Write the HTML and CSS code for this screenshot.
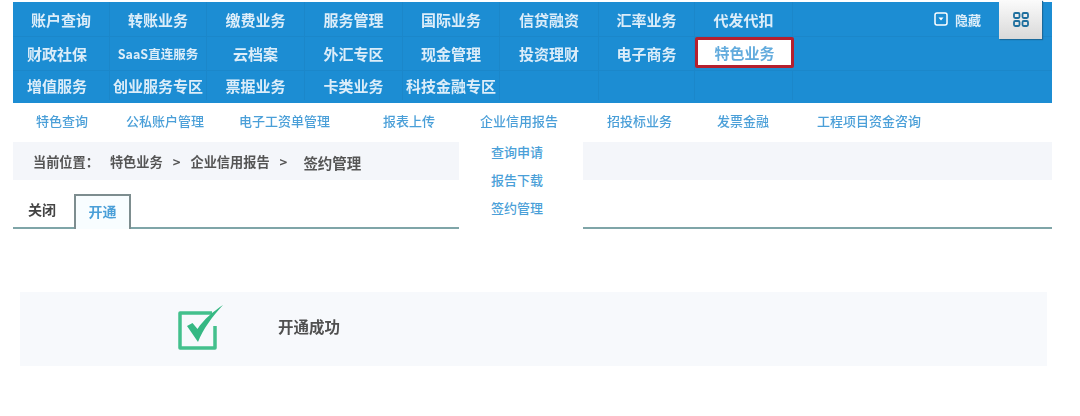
FILE: index.html
```html
<!DOCTYPE html>
<html lang="zh-CN">
<head>
    <meta charset="UTF-8">
    <title>特色业务 - 签约管理</title>
    <link rel="stylesheet" href="styles.css">
</head>
<body>
    <div class="page">
        <div class="nav">
            <div class="nav-row">
                <a class="nav-item">账户查询</a>
                <a class="nav-item">转账业务</a>
                <a class="nav-item">缴费业务</a>
                <a class="nav-item">服务管理</a>
                <a class="nav-item">国际业务</a>
                <a class="nav-item">信贷融资</a>
                <a class="nav-item">汇率业务</a>
                <a class="nav-item">代发代扣</a>
                <div class="nav-tools">
                    <span class="hide-link">
                        <svg class="hide-icon" viewBox="0 0 14 14" width="14" height="14">
                            <rect x="1" y="1" width="12" height="12" rx="2" fill="none" stroke="#fff" stroke-width="1.5"/>
                            <path d="M4.5 5.5h5L7 8.5z" fill="#fff"/>
                        </svg>
                        隐藏
                    </span>
                    <span class="grid-btn">
                        <svg viewBox="0 0 16 15" width="16" height="15">
                            <g fill="none" stroke="#1f6f9e" stroke-width="1.8">
                                <rect x="1" y="1" width="5.5" height="5" rx="1.2"/>
                                <rect x="9.5" y="1" width="5.5" height="5" rx="1.2"/>
                                <rect x="1" y="9" width="5.5" height="5" rx="1.2"/>
                                <rect x="9.5" y="9" width="5.5" height="5" rx="1.2"/>
                            </g>
                        </svg>
                    </span>
                </div>
            </div>
            <div class="nav-row">
                <a class="nav-item first">财政社保</a>
                <a class="nav-item small">SaaS直连服务</a>
                <a class="nav-item">云档案</a>
                <a class="nav-item">外汇专区</a>
                <a class="nav-item">现金管理</a>
                <a class="nav-item">投资理财</a>
                <a class="nav-item">电子商务</a>
                <a class="nav-item active">特色业务</a>
            </div>
            <div class="nav-row">
                <a class="nav-item first">增值服务</a>
                <a class="nav-item">创业服务专区</a>
                <a class="nav-item">票据业务</a>
                <a class="nav-item">卡类业务</a>
                <a class="nav-item">科技金融专区</a>
                <a class="nav-item"></a>
                <a class="nav-item"></a>
                <a class="nav-item"></a>
            </div>
        </div>

        <div class="subnav">
            <a>特色查询</a>
            <a>公私账户管理</a>
            <a>电子工资单管理</a>
            <a>报表上传</a>
            <a>企业信用报告</a>
            <a>招投标业务</a>
            <a>发票金融</a>
            <a>工程项目资金咨询</a>
        </div>

        <div class="content">
            <div class="crumb">
                <span class="crumb-label">当前位置：</span>
                <span>特色业务</span>
                <span class="crumb-sep">&gt;</span>
                <span>企业信用报告</span>
                <span class="crumb-sep">&gt;</span>
                <span class="crumb-last">签约管理</span>
            </div>

            <div class="tabs">
                <span class="tab">关闭</span>
                <span class="tab tab-on">开通</span>
            </div>

            <div class="dropdown">
                <a>查询申请</a>
                <a>报告下载</a>
                <a>签约管理</a>
            </div>
        </div>

        <div class="result">
            <svg class="result-icon" viewBox="0 0 46 46" width="46" height="46">
                <path d="M35 9H3v35h35V22" fill="none" stroke="#43c08c" stroke-width="3.5" stroke-linejoin="round"/>
                <path d="M10 22l11 16C26 25 35 13 46 1 37 7 27 15 20.500 25l-5-6z" fill="#35b883"/>
            </svg>
            <span class="result-text">开通成功</span>
        </div>
    </div>
</body>
</html>
```

FILE: styles.css
```css
body {
    margin: 0;
    background: #ffffff;
    font-family: "Noto Sans CJK SC", "Liberation Sans", sans-serif;
}

.page {
    padding: 2px 28px 0 13px;
    filter: blur(0.7px);
}

.nav {
    background: #1c8dd3;
    color: #dcedf9;
    font-size: 15px;
    font-weight: 700;
}

.nav-row {
    display: grid;
    grid-template-columns: 97px 97px 98px 98px 97px 99px 96px 98px 1fr;
    height: 33px;
    border-bottom: 1px solid #1b87ca;
}

.nav-row:first-child {
    height: 34px;
}

.nav-row:last-child {
    height: 32px;
    padding-bottom: 3px;
    box-sizing: border-box;
    border-bottom: none;
}

.nav-item {
    display: flex;
    align-items: center;
    justify-content: center;
    border-right: 1px solid #1b87ca;
}

.nav-item.first {
    padding-right: 8px;
}

.nav-item.small {
    font-size: 12.5px;
}

.nav-item.active {
    background: #ffffff;
    color: #62abdd;
    border: 3px solid #b4202f;
    border-radius: 2px;
    height: 31px;
    box-sizing: border-box;
    margin-right: -1px;
}

.nav-tools {
    display: flex;
    justify-content: flex-end;
    padding-right: 10px;
    position: relative;
}

.hide-link {
    display: flex;
    align-items: center;
    gap: 7px;
    height: 34px;
    margin-right: 61px;
    font-size: 13px;
}

.grid-btn {
    position: absolute;
    top: -2px;
    right: 10px;
    width: 43px;
    height: 39px;
    display: flex;
    align-items: center;
    justify-content: center;
    background: linear-gradient(#fbfbfb, #d9d9d9);
    box-shadow: 1px 1px 1px #1a6a9c;
}

.subnav {
    display: grid;
    grid-template-columns: 90px 113px 144px 97px 127px 110px 100px 1fr;
    height: 39px;
    padding: 0 0 5px 23px;
    box-sizing: border-box;
    align-items: center;
    color: #4a9fd8;
    font-size: 13px;
    font-weight: 500;
}

.content {
    position: relative;
}

.crumb {
    display: flex;
    align-items: center;
    gap: 10px;
    height: 38px;
    padding-left: 20px;
    background: #f4f6fa;
    color: #555555;
    font-size: 13.2px;
    font-weight: 700;
}

.crumb-label {
    margin-right: 1px;
}

.crumb-last {
    margin-left: 6px;
    padding-top: 3px;
    font-size: 14.5px;
}

.tabs {
    display: flex;
    height: 33px;
    margin-top: 14px;
    border-bottom: 2px solid #7fa5a8;
    font-size: 14px;
    font-weight: 700;
}

.tab {
    display: flex;
    align-items: center;
    justify-content: center;
    width: 58px;
    padding-bottom: 3px;
    color: #444444;
    background: #ffffff;
}

.tab-on {
    width: 53px;
    margin-left: 3px;
    margin-bottom: -2px;
    border: 2px solid #7d8d8f;
    border-bottom: none;
    background: #f8fdff;
    color: #4a9fd8;
}

.dropdown {
    position: absolute;
    top: -10px;
    left: 446px;
    width: 124px;
    height: 100px;
    padding: 6px 8px 0 0;
    box-sizing: border-box;
    display: flex;
    flex-direction: column;
    align-items: center;
    background: #ffffff;
    color: #4a9fd8;
    font-size: 13px;
    font-weight: 500;
}

.dropdown a {
    height: 28px;
    line-height: 28px;
}

.result {
    display: flex;
    align-items: center;
    height: 74px;
    margin: 63px 5px 0 7px;
    padding-left: 157px;
    background: #f7f9fc;
}

.result-icon {
    margin-top: -4px;
}

.result-text {
    margin-left: 55px;
    padding-bottom: 6px;
    color: #505050;
    font-size: 15.5px;
    font-weight: 700;
}
```
